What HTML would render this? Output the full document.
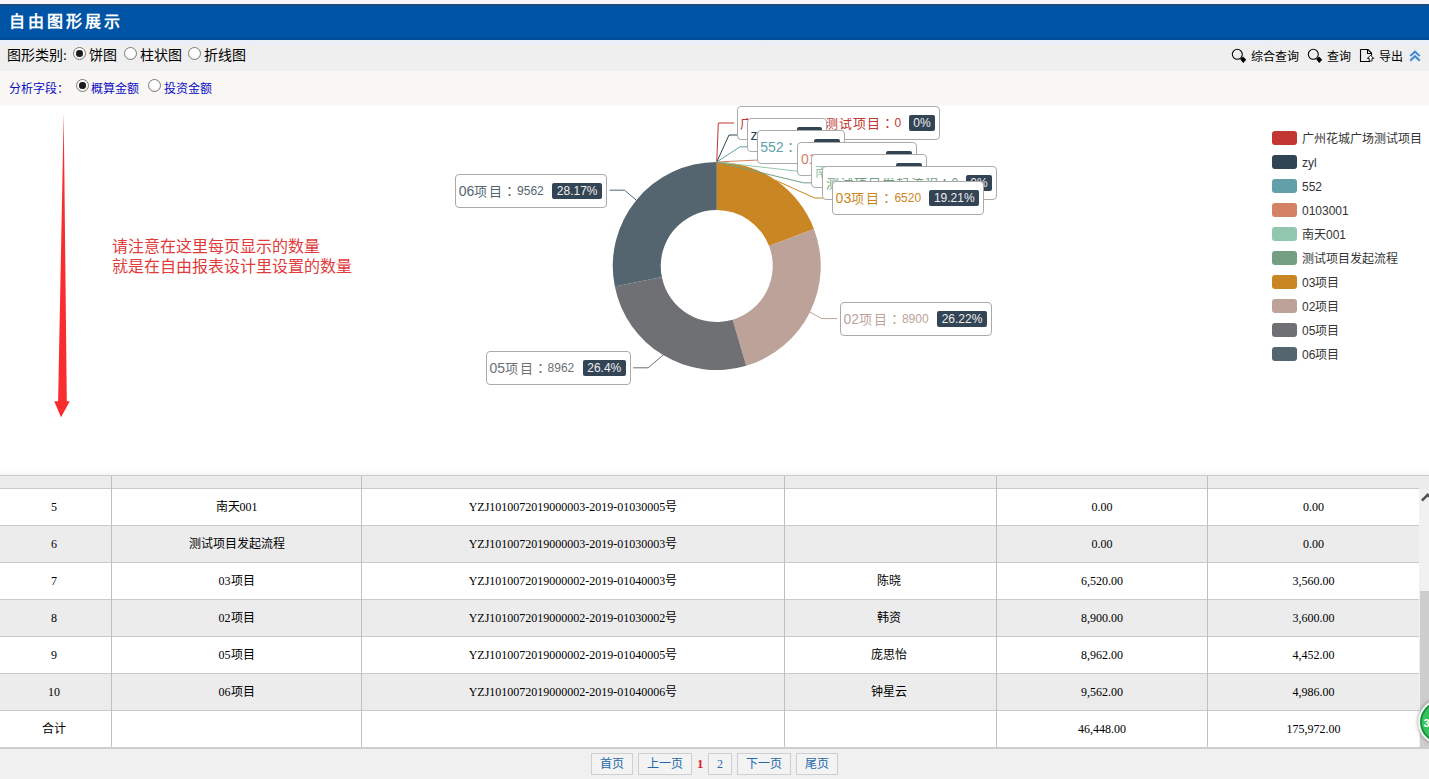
<!DOCTYPE html>
<html lang="zh-CN">
<head>
<meta charset="utf-8">
<title>自由图形展示</title>
<style>
html,body{margin:0;padding:0;}
html{overflow:hidden;}
body{width:1429px;height:779px;overflow:hidden;position:relative;background:#fff;font-family:"Liberation Serif",serif;font-size:12px;color:#000;}
.abs{position:absolute;white-space:nowrap;}
.z{display:inline-block;font-family:"Liberation Sans",sans-serif;text-align:justify;text-align-last:justify;white-space:nowrap;vertical-align:baseline;}
#topstrip{left:0;top:0;width:1429px;height:4px;background:#faf7fa;}
#titlebar{left:0;top:4px;width:1429px;height:36px;background:linear-gradient(#2a4f78 0,#1a4f88 1px,#06519c 2.5px,#0054a6 4px,#0054a6 32px,#004c98 35px,#004a94 36px);}
#title{left:9px;top:13px;height:18px;line-height:18px;font-size:16px;font-weight:bold;color:#fff;}
#row2{left:0;top:40px;width:1429px;height:31px;background:linear-gradient(#e9eef7 0,#e9eef7 4.5px,#f3eeec 6px,#f1eeed 8px,#efefef 10px,#efefef 100%);}
#row3{left:0;top:71px;width:1429px;height:35px;background:linear-gradient(#f9f7f3 0,#f9f7f3 34px,#fcfbf9 34px,#fcfbf9 35px);}
.t14{font-size:14px;line-height:16px;height:16px;top:47px;color:#000;}
.t12b{font-size:12px;line-height:14px;height:14px;top:82px;color:#0c0cc4;}
.radio{width:11px;height:11px;border:1px solid #7a7a7a;border-radius:50%;background:radial-gradient(circle at 50% 40%,#fff 0,#fff 45%,#e6e6e6 100%);}
.radio.on::after{content:"";position:absolute;left:2.25px;top:2.25px;width:6.5px;height:6.5px;border-radius:50%;background:#1c1c1c;}
.tool{font-size:12px;line-height:14px;height:14px;top:50px;color:#000;}
/* chart */
.lbl{position:absolute;height:32px;border:1px solid #aaa;border-radius:4px;background:#fff;box-sizing:content-box;font-family:"Liberation Sans",sans-serif;white-space:nowrap;overflow:hidden;}
.lbl .n{position:absolute;left:2.8px;top:0;height:32px;line-height:32px;font-size:14px;overflow:hidden;}
.lbl .n .z{font-size:13px;}
.lbl.k .n{top:11px;height:21px;line-height:10px;}
.lbl .v{position:absolute;top:0;height:32px;line-height:33px;font-size:12px;overflow:hidden;}
.lbl.k .v{top:11px;height:21px;line-height:11px;}
.lbl .p{position:absolute;right:4px;top:8px;height:16px;line-height:16.5px;font-size:12px;color:#eee;background:#334455;border-radius:2px;text-align:center;}
.lg{position:absolute;left:1272px;width:25px;height:14px;border-radius:3px;}
.lt{position:absolute;left:1302px;margin-top:1px;height:14px;line-height:14px;font-size:12px;color:#333;font-family:"Liberation Sans",sans-serif;white-space:nowrap;}
.note{left:112px;font-size:16px;line-height:18px;height:18px;color:#e03c3c;}
/* table */
#tshadow{left:0;top:470px;width:1429px;height:5px;background:linear-gradient(#fff,#f6f6f6);}
#thead{left:0;top:475px;width:1429px;height:13px;background:#ececec;border-top:1px solid #cacaca;}
#thead2{left:0;top:488px;width:1419px;height:1px;background:#cacaca;}
.row{position:absolute;left:0;width:1419px;height:36px;border-bottom:1px solid #cacaca;background:#fff;}
.row.g{background:#ececec;}
.c{position:absolute;top:0;height:36px;line-height:36px;font-size:12px;text-align:center;white-space:nowrap;color:#000;}
.c1{left:-1px;width:110px;}.c2{left:112px;width:249px;}.c3{left:362px;width:422px;}.c4{left:783px;width:211px;}.c5{left:997px;width:210px;}.c6{left:1208px;width:211px;}
.vl{position:absolute;top:476px;width:1px;height:271px;background:#c0c0c0;}
#tbot{left:0;top:747px;width:1429px;height:2px;background:#cdcdcd;}
#sbar{left:1419px;top:489px;width:10px;height:258px;background:#f1f1f1;}
#sthumb{left:1420px;top:591px;width:9px;height:156px;background:#cdcdcd;}
#pager{left:0;top:749px;width:1429px;height:30px;background:#f0f0f0;}
.pb{position:absolute;top:753px;height:20px;line-height:20px;border:1px solid #cfcfcf;background:#f3f3f3;color:#2368a8;font-size:12px;text-align:center;white-space:nowrap;}
#badge{left:1418.2px;top:699px;width:42px;height:42px;border-radius:50%;background:#35c35c;border:2px solid #e9f9ec;box-shadow:inset 0 0 0 1.8px #1c8a3c, 0 0 3px 1px rgba(90,60,90,.35);}
</style>
</head>
<body>

<div class="abs" id="topstrip"></div>
<div class="abs" id="titlebar"></div>
<div class="abs" id="title"><span class="z" style="width:111px">自由图形展示</span></div>
<div class="abs" id="row2"></div>
<div class="abs" id="row3"></div>

<div class="abs t14" style="left:7px;"><span class="z" style="width:56px">图形类别</span>:</div>
<div class="abs radio on" style="left:73px;top:47px;"></div>
<div class="abs t14" style="left:89px;"><span class="z" style="width:28px">饼图</span></div>
<div class="abs radio" style="left:124px;top:47px;"></div>
<div class="abs t14" style="left:140px;"><span class="z" style="width:42px">柱状图</span></div>
<div class="abs radio" style="left:188px;top:47px;"></div>
<div class="abs t14" style="left:204px;"><span class="z" style="width:42px">折线图</span></div>

<div class="abs t12b" style="left:9px;"><span class="z" style="width:60px">分析字段：</span></div>
<div class="abs radio on" style="left:76px;top:79px;"></div>
<div class="abs t12b" style="left:91px;"><span class="z" style="width:48px">概算金额</span></div>
<div class="abs radio" style="left:148px;top:79px;"></div>
<div class="abs t12b" style="left:164px;"><span class="z" style="width:48px">投资金额</span></div>

<svg class="abs" style="left:1228px;top:44px;" width="201" height="24" viewBox="1228 44 201 24">
 <g fill="none" stroke="#000" stroke-width="1.1">
  <circle cx="1237.3" cy="54.3" r="5"/>
  <circle cx="1313.3" cy="54.3" r="5"/>
 </g>
 <path d="M1240.2 59.2L1243 56.6L1246.2 59.8L1243.2 62.9Z" fill="#000"/>
 <path d="M1316.2 59.2L1319 56.6L1322.2 59.8L1319.2 62.9Z" fill="#000"/>
 <path d="M1360.5 49.5H1368L1371.5 53V55.5M1370 61.5H1360.5V49.5M1367.5 49.5V53.5H1371.5" fill="none" stroke="#000" stroke-width="1.1"/>
 <path d="M1370.6 55.2L1373.8 58.4H1372V61H1369.2V58.4H1367.4Z" fill="#fff" stroke="#000" stroke-width="0.9"/>
 <g fill="none" stroke="#bfe0fb" stroke-width="3.6" stroke-linejoin="miter" opacity="0.8">
  <path d="M1410.3 56L1415 51.6L1419.7 56"/><path d="M1410.3 60.6L1415 56.2L1419.7 60.6"/>
 </g>
 <g fill="none" stroke="#3a7ec4" stroke-width="1.7" stroke-linejoin="miter">
  <path d="M1410.3 56L1415 51.6L1419.7 56"/><path d="M1410.3 60.6L1415 56.2L1419.7 60.6"/>
 </g>
</svg>
<div class="abs tool" style="left:1251px;"><span class="z" style="width:48px">综合查询</span></div>
<div class="abs tool" style="left:1327px;"><span class="z" style="width:24px">查询</span></div>
<div class="abs tool" style="left:1379px;"><span class="z" style="width:24px">导出</span></div>


<svg class="abs" style="left:0;top:0;" width="1429" height="471" viewBox="0 0 1429 471">
<path d="M63.7 113L66.8 401.2L69.8 401.2L61 417.2L54.2 401.2L58.1 401.2Z" fill="#f92d30"/>
<path d="M716.75 162.00A104.0 104.0 0 0 1 813.94 228.98L769.08 246.07A56.0 56.0 0 0 0 716.75 210.00Z" fill="#ca8622"/>
<path d="M813.94 228.98A104.0 104.0 0 0 1 746.22 365.74L732.62 319.70A56.0 56.0 0 0 0 769.08 246.07Z" fill="#bda29a"/>
<path d="M746.22 365.74A104.0 104.0 0 0 1 614.81 286.58L661.86 277.08A56.0 56.0 0 0 0 732.62 319.70Z" fill="#6e7074"/>
<path d="M614.81 286.58A104.0 104.0 0 0 1 716.75 162.00L716.75 210.00A56.0 56.0 0 0 0 661.86 277.08Z" fill="#546570"/>
<g fill="none" stroke-width="1">
<polyline points="716.75,162 718.3,123 734,123" stroke="#c23531"/>
<polyline points="716.75,162 729,135 744,135" stroke="#2f4554"/>
<polyline points="716.75,162 740,146.8 754,146.8" stroke="#61a0a8"/>
<polyline points="716.75,162 779.7,159 794.7,159" stroke="#d48265"/>
<polyline points="716.75,162 796,171 809,171" stroke="#91c7ae"/>
<polyline points="716.75,162 803.5,182.8 819.6,182.8" stroke="#749f83"/>
<polyline points="775.77,180.37 814.5,198 829,198" stroke="#ca8622"/>
<polyline points="809.95,312.15 821.7,318.6 837.2,318.6" stroke="#bda29a"/>
<polyline points="663.09,355.09 648.1,367.8 633.2,367.8" stroke="#6e7074"/>
<polyline points="636.26,200.14 624.5,190.2 609.6,190.2" stroke="#546570"/>
</g>
</svg>
<div class="abs note" style="top:238px;"><span class="z" style="width:208px">请注意在这里每页显示的数量</span></div>
<div class="abs note" style="top:257.5px;"><span class="z" style="width:240px">就是在自由报表设计里设置的数量</span></div>
<div class="lbl k" style="left:736.6px;top:106.0px;width:201.2px;color:#c23531;"><span class="n"><span class="z" style="width:140px">广州花城广场测试项目</span><span class="z" lang="zh-TW" style="width:14px;text-align:center;text-align-last:center">：</span></span><span class="v" style="left:156.8px;">0</span><span class="p" style="width:25.8px;">0%</span></div>
<div class="lbl k" style="left:746.8px;top:118.0px;width:78.7px;color:#2f4554;"><span class="n">zyl<span class="z" lang="zh-TW" style="width:14px;text-align:center;text-align-last:center">：</span></span><span class="v" style="left:34.4px;">0</span><span class="p" style="width:25.8px;">0%</span></div>
<div class="lbl k" style="left:756.5px;top:130.0px;width:86.2px;color:#61a0a8;"><span class="n">552<span class="z" lang="zh-TW" style="width:14px;text-align:center;text-align-last:center">：</span></span><span class="v" style="left:41.9px;">0</span><span class="p" style="width:25.8px;">0%</span></div>
<div class="lbl k" style="left:797.2px;top:142.0px;width:117.8px;color:#d48265;"><span class="n">0103001<span class="z" lang="zh-TW" style="width:14px;text-align:center;text-align-last:center">：</span></span><span class="v" style="left:73.4px;">0</span><span class="p" style="width:25.8px;">0%</span></div>
<div class="lbl k" style="left:811.1px;top:154.0px;width:114.0px;color:#91c7ae;"><span class="n"><span class="z" style="width:28px">南天</span>001<span class="z" lang="zh-TW" style="width:14px;text-align:center;text-align-last:center">：</span></span><span class="v" style="left:69.7px;">0</span><span class="p" style="width:25.8px;">0%</span></div>
<div class="lbl k" style="left:821.9px;top:166.0px;width:173.0px;color:#749f83;"><span class="n"><span class="z" style="width:112px">测试项目发起流程</span><span class="z" lang="zh-TW" style="width:14px;text-align:center;text-align-last:center">：</span></span><span class="v" style="left:128.7px;">0</span><span class="p" style="width:25.8px;">0%</span></div>
<div class="lbl" style="left:831.8px;top:181.3px;width:150.2px;color:#ca8622;"><span class="n">03<span class="z" style="width:28px">项目</span><span class="z" lang="zh-TW" style="width:14px;text-align:center;text-align-last:center">：</span></span><span class="v" style="left:61.6px;">6520</span><span class="p" style="width:49.5px;">19.21%</span></div>
<div class="lbl" style="left:839.7px;top:302.0px;width:150.3px;color:#bda29a;"><span class="n">02<span class="z" style="width:28px">项目</span><span class="z" lang="zh-TW" style="width:14px;text-align:center;text-align-last:center">：</span></span><span class="v" style="left:61.2px;">8900</span><span class="p" style="width:50px;">26.22%</span></div>
<div class="lbl" style="left:485.7px;top:351.0px;width:143.2px;color:#6e7074;"><span class="n">05<span class="z" style="width:28px">项目</span><span class="z" lang="zh-TW" style="width:14px;text-align:center;text-align-last:center">：</span></span><span class="v" style="left:60.9px;">8962</span><span class="p" style="width:43.2px;">26.4%</span></div>
<div class="lbl" style="left:455.0px;top:173.5px;width:150.2px;color:#546570;"><span class="n">06<span class="z" style="width:28px">项目</span><span class="z" lang="zh-TW" style="width:14px;text-align:center;text-align-last:center">：</span></span><span class="v" style="left:61.1px;">9562</span><span class="p" style="width:50px;">28.17%</span></div>
<div class="lg" style="top:131px;background:#c23531;"></div><div class="lt" style="top:131px;"><span class="z" style="width:120px">广州花城广场测试项目</span></div>
<div class="lg" style="top:155px;background:#2f4554;"></div><div class="lt" style="top:155px;">zyl</div>
<div class="lg" style="top:179px;background:#61a0a8;"></div><div class="lt" style="top:179px;">552</div>
<div class="lg" style="top:203px;background:#d48265;"></div><div class="lt" style="top:203px;">0103001</div>
<div class="lg" style="top:227px;background:#91c7ae;"></div><div class="lt" style="top:227px;"><span class="z" style="width:24px">南天</span>001</div>
<div class="lg" style="top:251px;background:#749f83;"></div><div class="lt" style="top:251px;"><span class="z" style="width:96px">测试项目发起流程</span></div>
<div class="lg" style="top:275px;background:#ca8622;"></div><div class="lt" style="top:275px;">03<span class="z" style="width:24px">项目</span></div>
<div class="lg" style="top:299px;background:#bda29a;"></div><div class="lt" style="top:299px;">02<span class="z" style="width:24px">项目</span></div>
<div class="lg" style="top:323px;background:#6e7074;"></div><div class="lt" style="top:323px;">05<span class="z" style="width:24px">项目</span></div>
<div class="lg" style="top:347px;background:#546570;"></div><div class="lt" style="top:347px;">06<span class="z" style="width:24px">项目</span></div>


<div class="abs" id="tshadow"></div>
<div class="abs" id="thead"></div><div class="abs" id="thead2"></div>
<div class="row" style="top:489px;"><span class="c c1">5</span><span class="c c2"><span class="z" style="width:24px">南天</span>001</span><span class="c c3">YZJ1010072019000003-2019-01030005<span class="z" style="width:12px">号</span></span><span class="c c4"></span><span class="c c5">0.00</span><span class="c c6">0.00</span></div>
<div class="row g" style="top:526px;"><span class="c c1">6</span><span class="c c2"><span class="z" style="width:96px">测试项目发起流程</span></span><span class="c c3">YZJ1010072019000003-2019-01030003<span class="z" style="width:12px">号</span></span><span class="c c4"></span><span class="c c5">0.00</span><span class="c c6">0.00</span></div>
<div class="row" style="top:563px;"><span class="c c1">7</span><span class="c c2">03<span class="z" style="width:24px">项目</span></span><span class="c c3">YZJ1010072019000002-2019-01040003<span class="z" style="width:12px">号</span></span><span class="c c4"><span class="z" style="width:24px">陈晓</span></span><span class="c c5">6,520.00</span><span class="c c6">3,560.00</span></div>
<div class="row g" style="top:600px;"><span class="c c1">8</span><span class="c c2">02<span class="z" style="width:24px">项目</span></span><span class="c c3">YZJ1010072019000002-2019-01030002<span class="z" style="width:12px">号</span></span><span class="c c4"><span class="z" style="width:24px">韩资</span></span><span class="c c5">8,900.00</span><span class="c c6">3,600.00</span></div>
<div class="row" style="top:637px;"><span class="c c1">9</span><span class="c c2">05<span class="z" style="width:24px">项目</span></span><span class="c c3">YZJ1010072019000002-2019-01040005<span class="z" style="width:12px">号</span></span><span class="c c4"><span class="z" style="width:36px">庞思怡</span></span><span class="c c5">8,962.00</span><span class="c c6">4,452.00</span></div>
<div class="row g" style="top:674px;"><span class="c c1">10</span><span class="c c2">06<span class="z" style="width:24px">项目</span></span><span class="c c3">YZJ1010072019000002-2019-01040006<span class="z" style="width:12px">号</span></span><span class="c c4"><span class="z" style="width:36px">钟星云</span></span><span class="c c5">9,562.00</span><span class="c c6">4,986.00</span></div>
<div class="row" style="top:711px;"><span class="c c1"><span class="z" style="width:24px">合计</span></span><span class="c c2"></span><span class="c c3"></span><span class="c c4"></span><span class="c c5">46,448.00</span><span class="c c6">175,972.00</span></div>
<div class="vl" style="left:111px;"></div><div class="vl" style="left:361px;"></div><div class="vl" style="left:784px;"></div><div class="vl" style="left:996px;"></div><div class="vl" style="left:1207px;"></div>
<div class="abs" id="sbar"></div>
<div class="abs" id="sthumb"></div>
<svg class="abs" style="left:1420px;top:489px;" width="9" height="17" viewBox="0 0 9 17"><path d="M1.9 11.6L7.7 5.8L13.5 11.6" fill="none" stroke="#505050" stroke-width="2.4"/></svg>
<div class="abs" id="tbot"></div>


<div class="abs" id="pager"></div>
<div class="pb" style="left:591px;width:40px;"><span class="z" style="width:24px">首页</span></div>
<div class="pb" style="left:638px;width:52px;"><span class="z" style="width:36px">上一页</span></div>
<div class="abs" style="left:697px;top:754px;height:20px;line-height:20px;font-size:13px;font-weight:bold;color:#e0222c;">1</div>
<div class="pb" style="left:708px;width:22px;">2</div>
<div class="pb" style="left:737px;width:52px;"><span class="z" style="width:36px">下一页</span></div>
<div class="pb" style="left:796px;width:40px;"><span class="z" style="width:24px">尾页</span></div>
<div class="abs" id="badge"></div>
<div class="abs" style="left:1423.6px;top:715.5px;font-family:'Liberation Sans',sans-serif;font-weight:bold;font-size:11px;line-height:14px;color:#fff;">3</div>

</body>
</html>
